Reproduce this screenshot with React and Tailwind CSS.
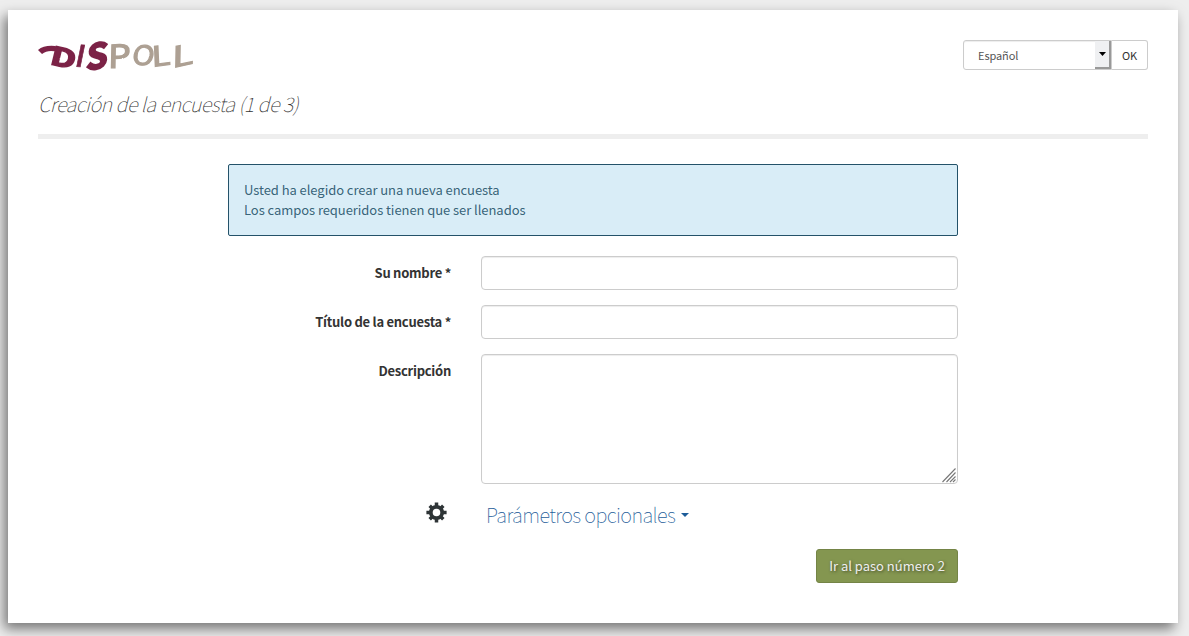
import { useId } from "react";

const sans = "font-['Noto_Sans_CJK_JP','Noto_Sans_CJK_SC',sans-serif]";

function Logo() {
  const id = useId();
  return (
    <svg width="160" height="36" viewBox="0 0 160 36" role="img" aria-label="Dispoll" className="block overflow-visible">
      <defs>
        <filter id={id} x="-5%" y="-10%" width="110%" height="120%">
          <feTurbulence type="fractalNoise" baseFrequency="0.3" numOctaves="2" seed="4" result="n" />
          <feDisplacementMap in="SourceGraphic" in2="n" scale="1.5" xChannelSelector="R" yChannelSelector="G" />
        </filter>
      </defs>
      <g filter={`url(#${id})`} fontFamily="Noto Sans CJK JP" fontSize="30">
        <g fill="#7b2346" stroke="#7b2346" strokeWidth="1.6" fontWeight="700">
          <path d="M0 10 Q6 5 17 6 L27 9 L20 12 Q10 9 4 14 Z" stroke="none" />
          <text transform="matrix(1.15 .25 -.2 .82 11 24)">D</text>
          <text transform="matrix(.8 .05 -.2 .98 36.500 26.500)" strokeWidth="0.8">I</text>
          <text transform="matrix(1.15 -.18 -.1 1.17 47.500 30.500)">S</text>
        </g>
        <g fill="#ada093" stroke="#ada093" strokeWidth="1.3" fontWeight="400">
          <text transform="matrix(1.18 -.04 -.02 1.05 70 28)">P</text>
          <text transform="matrix(.98 .08 -.15 .88 93 24)">O</text>
          <text transform="matrix(1.15 -.16 .04 .92 114 27)">L</text>
          <text transform="matrix(1.3 -.28 -.02 .95 134 28)">L</text>
        </g>
      </g>
    </svg>
  );
}

function Row({ label, children }) {
  return (
    <div className="flex items-start">
      <label className="w-[223px] shrink-0 pt-[7px] text-right text-[13px] leading-5 font-bold tracking-[-0.26px] text-[#333]">{label}</label>
      <div className="ml-[30px] flex-1">{children}</div>
    </div>
  );
}

const field =
  "block w-full rounded border border-[#ccc] bg-white px-3 text-[14px] shadow-[inset_0_1px_1px_rgba(0,0,0,0.075)] outline-none";

export default function App() {
  return (
    <div className={`h-[636px] overflow-hidden bg-[#eee] pt-[10px] pl-2 ${sans}`}>
      <main className="h-[613px] w-[1170px] bg-white px-[30px] pt-[30px] shadow-[-4px_6px_12px_rgba(0,0,0,0.5)]">
        <header className="h-[99px] border-b-[5px] border-[#eee]">
          <div className="flex h-[51px] items-start justify-between">
            <Logo />
            <form className="flex h-[30px] w-[185px] text-[11px] tracking-[-0.1px] text-[#555]" onSubmit={(e) => e.preventDefault()}>
              <div className="flex w-[149px] items-stretch justify-between rounded-l-[3px] border border-[#ccc] shadow-[inset_0_1px_1px_rgba(0,0,0,0.075)]">
                <span className="pl-[14px] leading-[28px]">Español</span>
                <span className="flex w-[16px] items-center justify-center border-r-2 border-b-2 border-[#999] bg-[#eff0f2]">
                  <svg width="7" height="4" viewBox="0 0 7 4"><path d="M0 0h7L3.5 4z" fill="#000" /></svg>
                </span>
              </div>
              <button className="flex-1 rounded-r-[3px] border border-l-0 border-[#ccc] leading-[28px] text-[#333]">OK</button>
            </form>
          </div>
          <h1 className="text-[20px] leading-[26px] font-thin tracking-[-0.53px] text-[#333] italic">
            Creación de la encuesta (1 de 3)
          </h1>
        </header>
        <section className="mx-auto mt-[25px] w-[730px]">
          <div className="mb-5 h-[72px] rounded-[2px] border border-[#245269] bg-[#d9edf7] px-[15px] py-[15px] text-[13px] leading-5 tracking-[-0.06px] text-[#245269]/90">
            <p>Usted ha elegido crear una nueva encuesta</p>
            <p>Los campos requeridos tienen que ser llenados</p>
          </div>
          <form className="flex flex-col gap-[15px]" onSubmit={(e) => e.preventDefault()}>
            <Row label="Su nombre *"><input className={`${field} h-[34px]`} /></Row>
            <Row label="Título de la encuesta *"><input className={`${field} h-[34px]`} /></Row>
            <Row label="Descripción">
              <div className={`${field} flex h-[130px] items-end pr-0`}>
                <textarea aria-label="Descripción" className="h-full flex-1 resize-none outline-none" />
                <svg width="15" height="15" viewBox="0 0 15 15" className="shrink-0" stroke="#777" strokeWidth="1.1">
                  <path d="M.5 14 13.500.5M4.500 14 13.500 4.500M8 14 13.500 8.500M11 14 13.500 11.500" />
                </svg>
              </div>
            </Row>
          </form>
          <div className="mt-[15px] flex h-[35px] items-start">
            <div className="flex w-[223px] justify-end pt-[3px] pr-1">
              <svg width="21" height="21" viewBox="0 0 21 21" fill="none" stroke="#2e3436">
                <circle cx="10.500" cy="10.500" r="5.700" strokeWidth="3.800" />
                <path strokeWidth="3.500" d="M10.500.4v4M10.500 16.600v4M.4 10.500h4M16.600 10.500h4M3.700 3.700l2.500 2.500M14.800 14.800l2.500 2.500M17.300 3.700l-2.500 2.500M6.200 14.800l-2.500 2.500" />
              </svg>
            </div>
            <a className="ml-[35px] flex items-center text-[20px] leading-[31px] font-thin tracking-[-0.6px] text-[#1d5c99]">
              Parámetros opcionales
              <svg width="8" height="4" viewBox="0 0 8 4" className="mt-px ml-[6px]"><path d="M0 0h8L4 4z" fill="#1d5c99" /></svg>
            </a>
          </div>
          <div className="mt-[15px] flex justify-end">
            <button className="h-[34px] w-[142px] rounded-[3px] border border-[#748446] bg-[#849650] text-[13px] leading-8 text-[#eee] [text-shadow:1px_1px_3px_rgba(0,0,0,0.5)]">
              Ir al paso número 2
            </button>
          </div>
        </section>
      </main>
    </div>
  );
}
